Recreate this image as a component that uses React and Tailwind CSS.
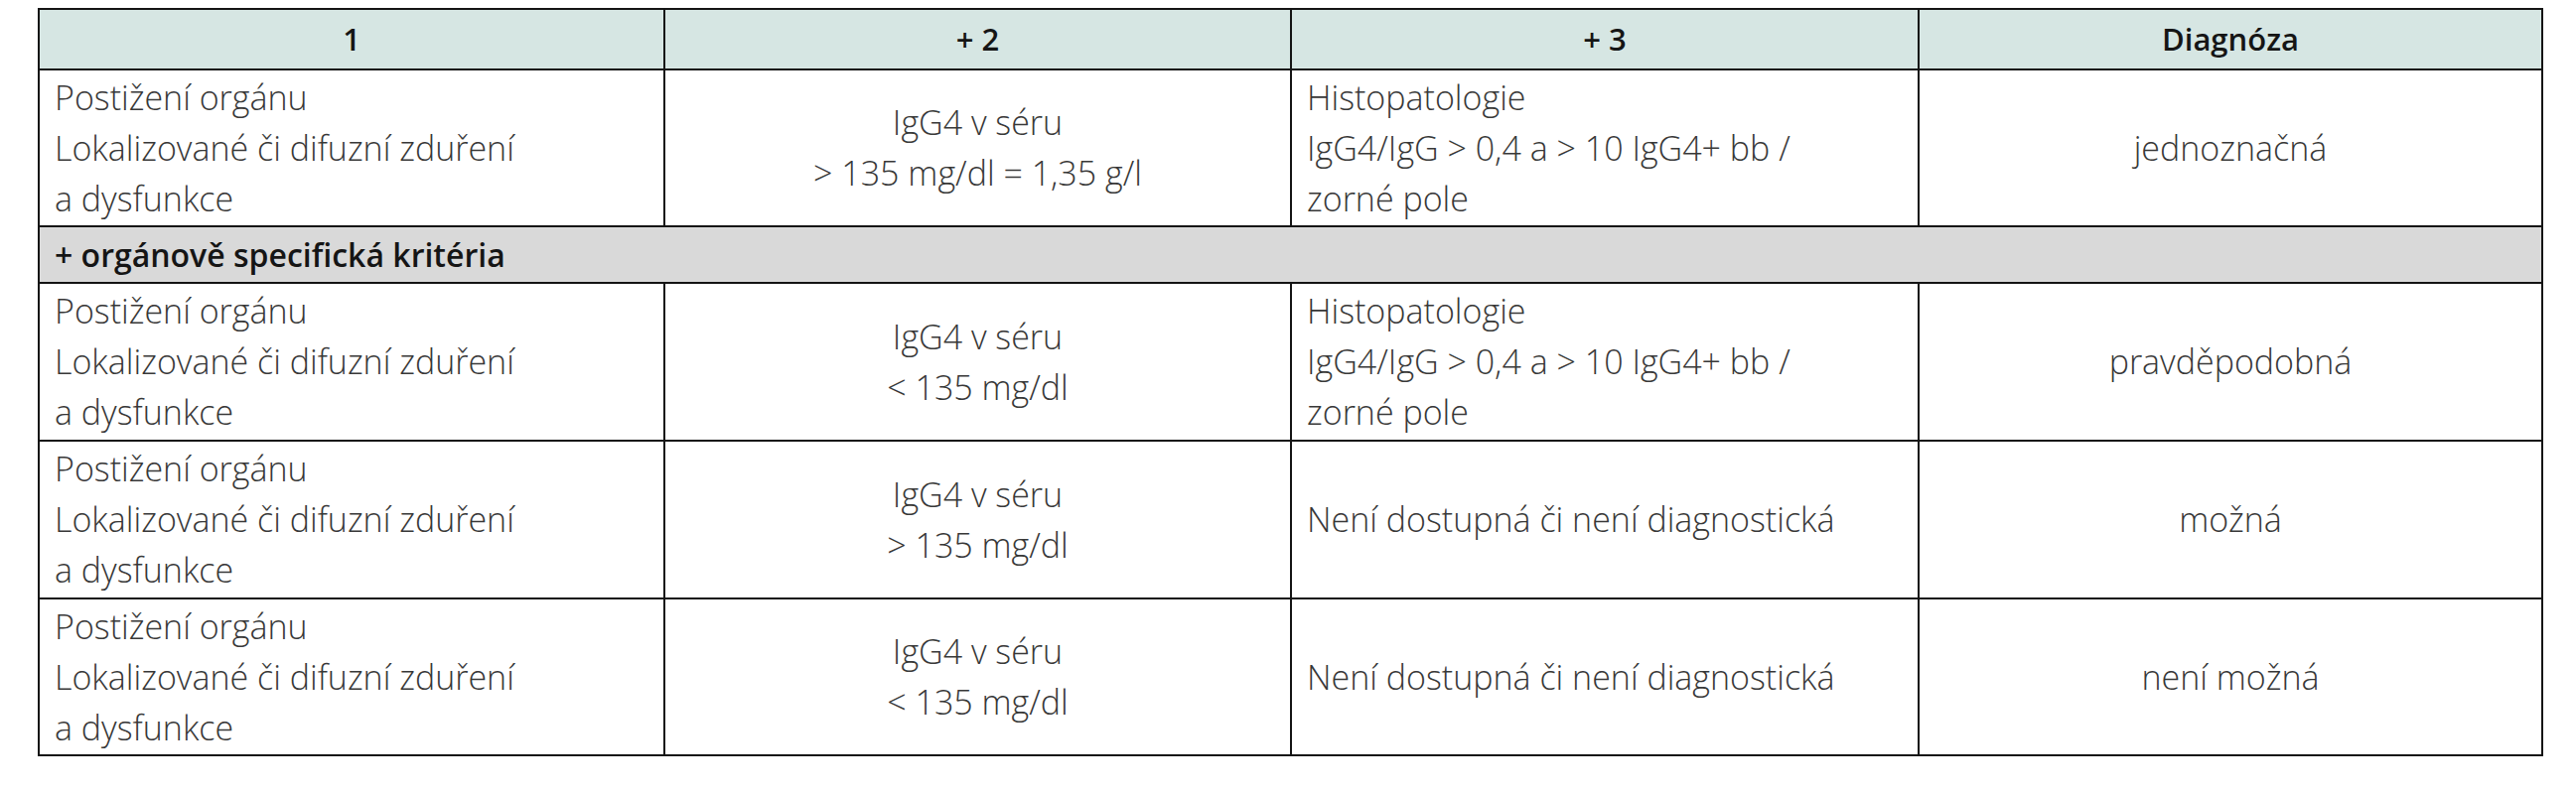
export default function App() {
  const col1 = (
    <>
      <div>Postižení orgánu</div>
      <div>Lokalizované či difuzní zduření</div>
      <div>a dysfunkce</div>
    </>
  );
  const histo = (
    <>
      <div>Histopatologie</div>
      <div>IgG4/IgG &gt; 0,4 a &gt; 10 IgG4+ bb /</div>
      <div>zorné pole</div>
    </>
  );
  const rows = [
    {
      h: "h-[159px]",
      c2: ["IgG4 v séru", "< 135 mg/dl"],
      c3: histo,
      c4: "pravděpodobná",
    },
    {
      h: "h-[159px]",
      c2: ["IgG4 v séru", "> 135 mg/dl"],
      c3: <div>Není dostupná či není diagnostická</div>,
      c4: "možná",
    },
    {
      h: "h-[158px]",
      c2: ["IgG4 v séru", "< 135 mg/dl"],
      c3: <div>Není dostupná či není diagnostická</div>,
      c4: "není možná",
    },
  ];
  const td = "border-2 border-[#141414] align-middle px-[15px]";
  const th = "border-2 border-[#141414] align-middle text-center font-semibold text-[#151515] text-[31px]";
  return (
    <div className="w-[2594px] h-[800px] bg-white pt-[8px] pl-[38px] font-['Open_Sans',sans-serif]">
      <table className="border-collapse table-fixed w-[2521px]">
        <colgroup>
          <col className="w-[630px]" />
          <col className="w-[631px]" />
          <col className="w-[632px]" />
          <col className="w-[628px]" />
        </colgroup>
        <thead>
          <tr className="h-[61px] bg-[#d6e6e3]">
            <th className={th}>1</th>
            <th className={th}>+ 2</th>
            <th className={th}>+ 3</th>
            <th className={th}>Diagnóza</th>
          </tr>
        </thead>
        <tbody className="text-[34px] leading-[51px] font-light text-[#383838]">
          <tr className="h-[158px]">
            <td className={td + " text-left"}>{col1}</td>
            <td className={td + " text-center"}>
              <div>IgG4 v séru</div>
              <div>&gt; 135 mg/dl = 1,35 g/l</div>
            </td>
            <td className={td + " text-left"}>{histo}</td>
            <td className={td + " text-center"}>jednoznačná</td>
          </tr>
          <tr className="h-[57px] bg-[#d9d9d9]">
            <td colSpan={4} className="border-2 border-[#141414] align-middle px-[15px] text-left font-semibold text-[#151515] text-[32px] leading-[42px]">
              + orgánově specifická kritéria
            </td>
          </tr>
          {rows.map((r, i) => (
            <tr key={i} className={r.h}>
              <td className={td + " text-left"}>{col1}</td>
              <td className={td + " text-center"}>
                <div>{r.c2[0]}</div>
                <div>{r.c2[1]}</div>
              </td>
              <td className={td + " text-left"}>{r.c3}</td>
              <td className={td + " text-center"}>{r.c4}</td>
            </tr>
          ))}
        </tbody>
      </table>
    </div>
  );
}
